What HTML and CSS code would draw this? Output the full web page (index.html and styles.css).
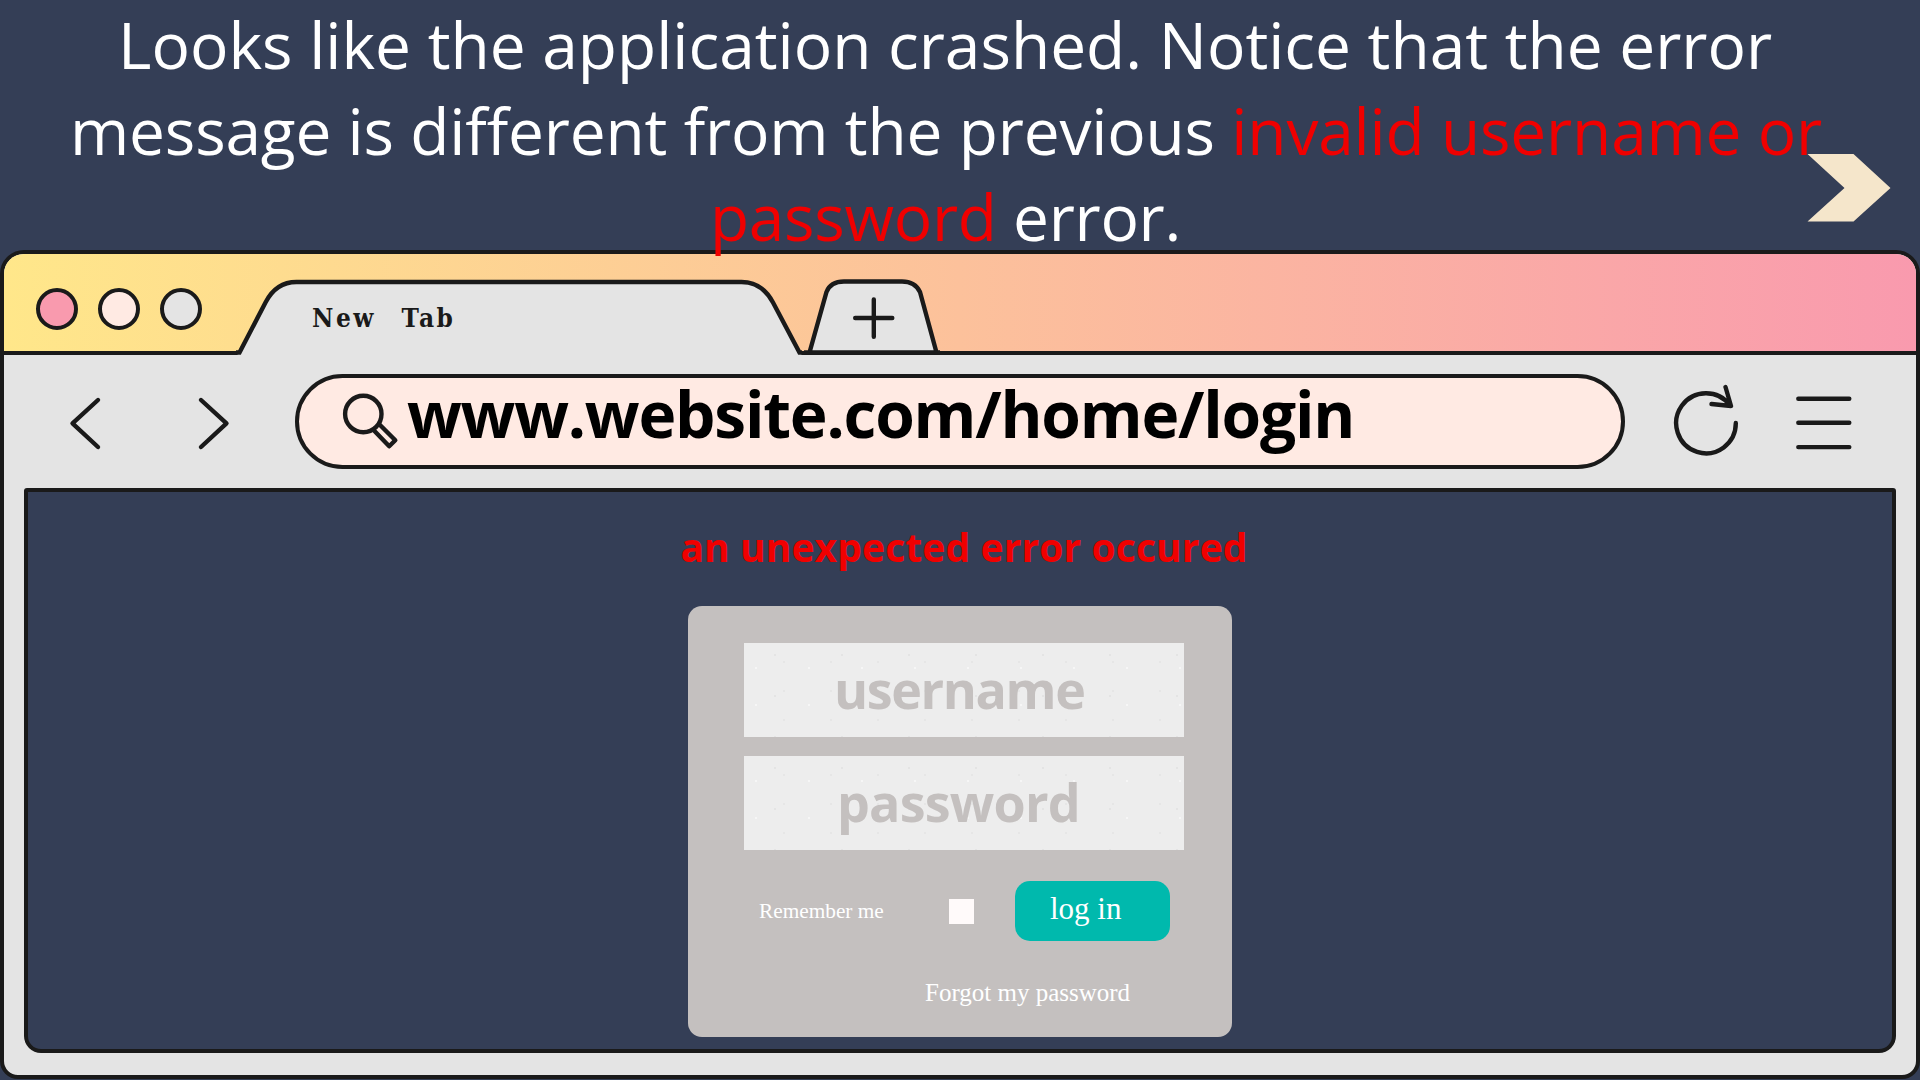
FILE: index.html
```html
<!DOCTYPE html>
<html lang="en">
<head>
<meta charset="utf-8">
<title>Login error</title>
<link rel="stylesheet" href="styles.css">
</head>
<body>
<header class="caption">
  <h1 class="caption-text">
    <span class="line line-1">Looks like the application crashed. Notice that the error</span>
    <span class="line line-2">message is different from the previous <em>invalid username or</em></span>
    <span class="line line-3"><em>password</em> error.</span>
  </h1>
  <svg class="next" width="84" height="68" viewBox="0 0 84 68"><path d="M0.5 0H46.5L83.5 34L46.5 67.5H0.5L37.5 34Z" fill="#f5e6cb"/></svg>
</header>

<main class="window">
  <div class="titlebar">
    <div class="lights"><i class="light pink"></i><i class="light cream"></i><i class="light grey"></i></div>
    <div class="tab">
      <svg width="566" height="76" viewBox="236 279 566 76"><path d="M237 355L239.8 352.5L265.5 302.5Q276 282 296.5 282H741.5Q762 282 773 302.5L799.5 352.5L802 355Z" fill="#e4e4e4"/><path d="M236 352.5H239.5L265.5 302.5Q276 282 296.5 282H741.5Q762 282 773 302.5L799.5 352.5H802" fill="none" stroke="#1a1a1a" stroke-width="4.4"/></svg>
      <span class="tab-label">New Tab</span>
    </div>
    <svg class="new-tab" width="136" height="76" viewBox="804 279 136 76"><path d="M809.5 352.5L826.5 292Q830.5 281.5 844 281.5H902Q915 281.5 920 292L936.5 352.5Z" fill="#e4e4e4"/><path d="M804 352.5H940M809.5 352.5L826.5 292Q830.5 281.5 844 281.5H902Q915 281.5 920 292L936.5 352.5" fill="none" stroke="#1a1a1a" stroke-width="4.4"/><path d="M855.2 318H892.3M873.8 299.5V336.7" stroke="#1a1a1a" stroke-width="4.4" stroke-linecap="round"/></svg>
  </div>

  <div class="toolbar">
    <svg class="nav" width="164" height="56" viewBox="68 395 164 56"><path d="M98 400L72.5 423.3L98 447M201 400L226.5 423.3L201 447"/></svg>
    <div class="address">
      <svg class="search" width="60" height="60" viewBox="340 392 60 60"><circle cx="363.3" cy="414" r="18.2"/><path d="M379.5 424.5L395.3 440.3L389.2 446.3L374 430.5"/></svg>
      <span class="url">www.website.com/home/login</span>
    </div>
    <svg class="reload" width="66" height="74" viewBox="1673 384 66 74"><path d="M1735.8 423A29.8 30 0 1 1 1730 405.5M1725.5 387L1731 406L1711.5 404"/></svg>
    <svg class="menu" width="56" height="56" viewBox="1796 395 56 56"><path d="M1798.3 398.7H1849.3M1798.3 422.8H1849.3M1798.3 447.1H1849.3"/></svg>
  </div>

  <section class="viewport">
    <p class="error">an unexpected error occured</p>
    <form class="card">
      <div class="field username"><span>username</span></div>
      <div class="field password"><span>password</span></div>
      <div class="actions">
        <span class="remember">Remember me</span>
        <span class="check"></span>
        <span class="login">log in</span>
      </div>
      <div class="forgot">Forgot my password</div>
    </form>
  </section>
</main>
</body>
</html>
```
FILE: styles.css
```css
* { box-sizing: border-box; }
body {
  margin: 0;
  width: 1920px;
  height: 1080px;
  overflow: hidden;
  background: #343e56;
  font-family: "Open Sans", "Noto Sans", sans-serif;
}
svg { display: block; flex: none; }

.caption { position: relative; z-index: 1; height: 250px; }
.caption-text {
  margin: 0;
  padding-top: 2px;
  font-size: 64px;
  line-height: 86px;
  font-weight: 400;
  color: #fff;
}
.line { display: block; white-space: nowrap; }
.line-1 { padding-left: 118px; }
.line-2 { padding-left: 70px; letter-spacing: -.18px; }
.line-3 { padding-left: 710px; letter-spacing: -.3px; }
.caption em { font-style: normal; color: #f00000; }
.next { position: absolute; left: 1807px; top: 154px; }

.window {
  height: 829px;
  border: 4px solid #1a1a1a;
  border-radius: 24px 24px 18px 18px;
  background: #e4e4e4;
  overflow: hidden;
}
.titlebar {
  display: flex;
  height: 101px;
  border-bottom: 4px solid #1a1a1a;
  background: linear-gradient(90deg, #ffe78a, #fcc19b 50%, #f99aae);
}
.lights { display: flex; gap: 20px; padding: 34px 0 0 32px; width: 232px; }
.light { width: 42px; height: 42px; border: 4px solid #1a1a1a; border-radius: 50%; }
.pink { background: #f99aae; }
.cream { background: #ffeae3; }
.grey { background: #e4e4e4; }
.tab { display: grid; margin-top: 25px; height: 76px; }
.tab > * { grid-area: 1 / 1; }
.tab-label {
  padding: 21px 0 0 76px;
  font: bold 26px/36px "DejaVu Serif", serif;
  font-stretch: condensed;
  letter-spacing: 2.5px;
  word-spacing: 15px;
  color: #1a1a1a;
}
.new-tab { margin: 25px 0 0 2px; }

.toolbar { display: flex; height: 133px; padding-left: 64px; }
.toolbar svg { fill: none; stroke: #1a1a1a; stroke-width: 4.4; stroke-linecap: round; stroke-linejoin: round; }
.nav { margin-top: 40px; }
.address {
  display: flex;
  width: 1330px;
  height: 95px;
  margin: 19px 0 0 63px;
  border: 4px solid #1a1a1a;
  border-radius: 48px;
  background: #ffeae3;
}
.search { margin: 14px 0 0 41px; }
.url { margin-left: 7px; font-size: 64px; line-height: 71px; font-weight: 700; color: #000; letter-spacing: -1.2px; }
.reload { margin: 29px 0 0 48px; }
.menu { margin: 40px 0 0 57px; }

.viewport {
  display: flex;
  flex-direction: column;
  align-items: center;
  width: 1872px;
  height: 565px;
  margin-left: 20px;
  border: 4px solid #1a1a1a;
  border-radius: 3px 3px 17px 17px;
  background: #343e56;
}
.error { margin: 28px 0 0 8px; font-size: 39px; line-height: 54px; font-weight: 700; letter-spacing: .1px; color: #f00000; }
.card { width: 544px; height: 431px; margin-top: 32px; padding: 37px 0 0 56px; border-radius: 14px; background: #c4c0bf; }
.field {
  width: 440px;
  height: 94px;
  margin-bottom: 18.5px;
  background:
    radial-gradient(circle at 31px 12px, #e4e4e4 0 .8px, transparent 1.3px) 0 0 / 67px 41px,
    radial-gradient(circle at 12px 25px, #f6f6f6 0 1px, transparent 1.5px) 0 0 / 53px 37px,
    radial-gradient(circle at 40px 19px, #e6e6e6 0 .8px, transparent 1.3px) 0 0 / 47px 29px,
    #ededed;
  font-size: 52px;
  line-height: 92px;
  font-weight: 700;
  color: #c4c0bf;
}
.username { padding-left: 90px; letter-spacing: -1.4px; }
.password { padding-left: 93px; letter-spacing: -.8px; line-height: 91px; }
.actions { display: flex; margin-top: 31.5px; height: 60px; font-family: "Liberation Serif", serif; color: #fff; }
.remember { width: 190px; padding: 18px 0 0 15px; font-size: 21.3px; line-height: 24px; margin-right: 15px; }
.check { width: 25px; height: 25px; margin: 18px 41px 0 0; background: #fffafa; }
.login { width: 154.5px; height: 59.5px; padding-left: 35px; border-radius: 15px; background: #00b9ad; font-size: 31px; line-height: 55px; }
.forgot { padding: 37px 0 0 181px; font: 25px/30px "Liberation Serif", serif; color: #fff; }
```
